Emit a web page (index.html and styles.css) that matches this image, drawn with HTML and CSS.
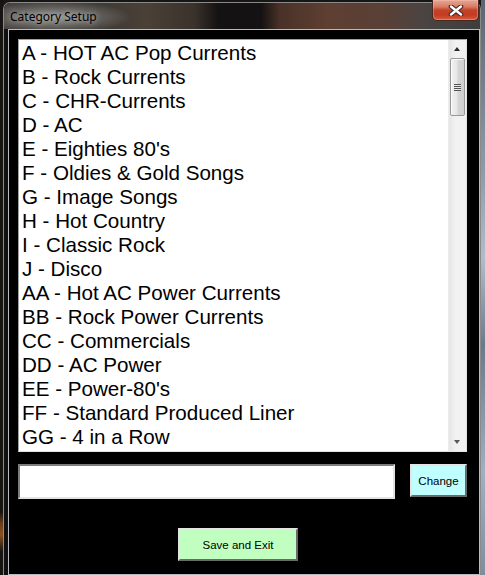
FILE: index.html
```html
<!DOCTYPE html>
<html>
<head>
<meta charset="utf-8">
<title>Category Setup</title>
<link rel="stylesheet" href="styles.css">
</head>
<body>
<div class="window">
  <div class="titlebar">
    <span class="title">Category Setup</span>
    <button class="close" aria-label="Close">
      <svg width="16" height="11" viewBox="0 0 16 11">
        <path d="M3 1.5 L13 9.5 M13 1.5 L3 9.5" stroke="#3a2a28" stroke-width="4.6" stroke-linecap="round" fill="none"/>
        <path d="M3 1.5 L13 9.5 M13 1.5 L3 9.5" stroke="#ffffff" stroke-width="2.4" stroke-linecap="round" fill="none"/>
      </svg>
    </button>
  </div>
  <div class="client">
    <div class="listbox">
      <ul class="items">
        <li>A - HOT AC Pop Currents</li>
        <li>B - Rock Currents</li>
        <li>C - CHR-Currents</li>
        <li>D - AC</li>
        <li>E - Eighties 80's</li>
        <li>F - Oldies &amp; Gold Songs</li>
        <li>G - Image Songs</li>
        <li>H - Hot Country</li>
        <li>I - Classic Rock</li>
        <li>J - Disco</li>
        <li>AA - Hot AC Power Currents</li>
        <li>BB - Rock Power Currents</li>
        <li>CC - Commercials</li>
        <li>DD - AC Power</li>
        <li>EE - Power-80's</li>
        <li>FF - Standard Produced Liner</li>
        <li>GG - 4 in a Row</li>
      </ul>
      <div class="scrollbar">
        <div class="arrow arrow-up"></div>
        <div class="track">
          <div class="thumb"><span class="grip"></span></div>
        </div>
        <div class="arrow arrow-down"></div>
      </div>
    </div>
    <div class="edit-row">
      <input class="edit" type="text" value="">
      <button class="btn btn-change">Change</button>
    </div>
    <div class="save-row">
      <button class="btn btn-save">Save and Exit</button>
    </div>
  </div>
</div>
</body>
</html>
```
FILE: styles.css
```css
html, body {
  margin: 0;
  padding: 0;
}

body {
  width: 485px;
  height: 575px;
  overflow: hidden;
  background:
    linear-gradient(to bottom, #5d6670 0%, #8e9caa 30%, #b0bccb 45%, #6a7a8e 60%, #9fb0c4 82%, #7d8ea4 100%) right top / 4px 100% no-repeat,
    linear-gradient(to bottom, #161412 0%, #161412 89%, #6a3c18 91%, #8a5020 93%, #161412 96%) left top / 3px 100% no-repeat,
    #181614;
}

.window {
  box-sizing: border-box;
  margin: 2px 0 0 3px;
  width: 478px;
  height: 573px;
  border: 1px solid #8a8a8a;
  border-bottom: none;
  border-radius: 7px 7px 0 0;
  background: #101010;
  display: flex;
  flex-direction: column;
}

.titlebar {
  height: 26px;
  flex: none;
  display: flex;
  align-items: flex-start;
  border-radius: 6px 6px 0 0;
  background:
    radial-gradient(ellipse 75px 16px at 52px 14px, rgba(200, 200, 195, 0.6), rgba(200, 200, 195, 0) 100%),
    linear-gradient(to right, #45423f 0%, #3e3a36 20%, #4a4036 30%, #3a322c 40%, #141212 45%, #141212 54%, #4a3228 58%, #5e3f32 68%, #5a4036 80%, #4a4442 88%, #3e3e3e 100%);
}

.title {
  margin: 6px 0 0 6px;
  font-family: "Noto Sans", "DejaVu Sans", sans-serif;
  font-size: 12px;
  line-height: 16px;
  color: #000;
  text-shadow: 0 0 6px rgba(235, 235, 235, 0.8);
}

.close {
  margin: -3px 1px 0 auto;
  width: 47px;
  height: 21px;
  padding: 0;
  border: 1px solid #4a2620;
  border-top: none;
  border-radius: 0 0 5px 5px;
  background: linear-gradient(to bottom, #e6a897 0%, #d77a62 35%, #c7402a 50%, #c23b22 75%, #d4603e 100%);
  box-shadow: inset 0 0 0 1px rgba(255, 200, 180, 0.35);
  display: flex;
  align-items: center;
  justify-content: center;
}

.close svg {
  display: block;
}

.client {
  box-sizing: border-box;
  margin: 0 0 0 4px;
  width: 472px;
  flex: 1;
  border: 1px solid #b8bcc0;
  background: #000;
  padding: 9px 11px 0 9px;
}

.listbox {
  box-sizing: border-box;
  width: 449px;
  height: 413px;
  border: 1px solid;
  border-color: #a0a0a0 #e3e3e3 #e3e3e3 #a0a0a0;
  background: #fff;
  display: flex;
}

.items {
  flex: 1;
  margin: 0;
  padding: 1px 0 0 3px;
  list-style: none;
  overflow: hidden;
  font-family: "Liberation Sans", Arial, sans-serif;
  font-size: 20.6px;
  line-height: 24px;
  color: #000;
}

.items li {
  white-space: nowrap;
}

.scrollbar {
  width: 17px;
  flex: none;
  display: flex;
  flex-direction: column;
  background: linear-gradient(to right, #e6e6e6, #f2f2f2 40%, #f0f0f0);
  border-left: 1px solid #ececec;
}

.arrow {
  height: 17px;
  flex: none;
  position: relative;
}

.arrow::after {
  content: "";
  position: absolute;
  left: 5px;
  width: 0;
  height: 0;
  border-left: 3.5px solid transparent;
  border-right: 3.5px solid transparent;
}

.arrow-up::after {
  top: 7px;
  border-bottom: 4px solid #2a2a2a;
}

.arrow-down::after {
  top: 6px;
  border-top: 4px solid #5a5a5a;
}

.track {
  flex: 1;
}

.thumb {
  box-sizing: border-box;
  margin: 1px 0 0 1px;
  width: 15px;
  height: 58px;
  border: 1px solid #989898;
  border-radius: 2px;
  background: linear-gradient(to right, #f2f2f2 0%, #e6e6e6 45%, #d6d6d6 55%, #cfcfcf 100%);
  box-shadow: inset 1px 1px 0 #fbfbfb;
  display: flex;
  align-items: center;
  justify-content: center;
}

.grip {
  display: block;
  width: 7px;
  height: 7px;
  background: repeating-linear-gradient(to bottom, #555 0px, #555 1px, #e8e8e8 1px, #e8e8e8 2px);
}

.edit-row {
  display: flex;
  align-items: flex-start;
  margin-top: 12px;
}

.edit {
  box-sizing: border-box;
  width: 377px;
  height: 35px;
  margin: 0;
  padding: 2px 4px;
  border: 2px solid;
  border-color: #7c7c7c #e3e3e3 #e3e3e3 #7c7c7c;
  background: #fff;
  font-family: "Liberation Sans", Arial, sans-serif;
  font-size: 16px;
  outline: none;
}

.btn {
  box-sizing: border-box;
  margin: 0;
  padding: 0;
  border: 2px solid;
  border-color: #e4e4e4 #6a6a6a #6a6a6a #e4e4e4;
  font-family: "Liberation Sans", Arial, sans-serif;
  font-size: 11.5px;
  color: #000;
}

.btn-change {
  margin-left: 15px;
  width: 57px;
  height: 33px;
  background: #c0ffff;
}

.save-row {
  display: flex;
  margin-top: 29px;
  padding-left: 160px;
}

.btn-save {
  width: 120px;
  height: 33px;
  background: #c0ffc0;
}
```
